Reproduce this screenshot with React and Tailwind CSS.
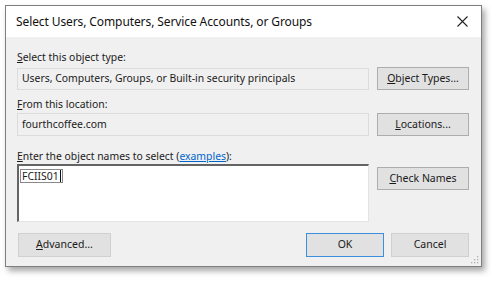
export default function App() {
  const font = { fontFamily: '"Noto Sans", "Open Sans", Arial, sans-serif' };
  const btn =
    "h-[23px] w-[92px] flex items-center justify-center bg-[#e1e1e1] border border-[#adadad] text-[10.5px] text-[#1a1a1a]";
  return (
    <div className="w-[498px] h-[283px] bg-white overflow-hidden" style={font}>
      <div className="ml-[5px] mt-[5px] w-[477px] h-[262px] border border-[#7f7f7f] bg-[#f0f0f0] flex flex-col shadow-[3px_4px_6px_rgba(0,0,0,0.35)]">
        <div className="h-[31px] bg-white flex items-center justify-between pl-[10px] pr-[12px]">
          <span className="text-[12px] text-[#111] tracking-[-0.1px]">
            Select Users, Computers, Service Accounts, or Groups
          </span>
          <svg width="11" height="11" viewBox="0 0 11 11" className="mr-[1px]">
            <path d="M0.5 0.5L10.5 10.5M10.5 0.5L0.5 10.5" stroke="#222" strokeWidth="1.1" />
          </svg>
        </div>
        <div className="flex-1 flex flex-col pl-[11px] pr-[12px] text-[10.4px] text-[#1a1a1a] relative">
          <div className="mt-[13px] h-[14px] leading-[14px]">
            <u>S</u>elect this object type:
          </div>
          <div className="mt-[3px] flex items-center gap-[8px]">
            <div className="h-[22px] w-[352px] border border-[#dcdcdc] bg-[#f0f0f0] flex items-center pl-[4px]">
              Users, Computers, Groups, or Built-in security principals
            </div>
            <div className={btn}>
              <span>
                <u>O</u>bject Types...
              </span>
            </div>
          </div>
          <div className="mt-[7px] h-[14px] leading-[14px]">
            <u>F</u>rom this location:
          </div>
          <div className="mt-[2px] flex items-center gap-[8px]">
            <div className="h-[23px] w-[352px] border border-[#dcdcdc] bg-[#f0f0f0] flex items-center pl-[4px]">
              fourthcoffee.com
            </div>
            <div className={btn}>
              <span>
                <u>L</u>ocations...
              </span>
            </div>
          </div>
          <div className="mt-[13px] h-[14px] leading-[14px]">
            <u>E</u>nter the object names to select (
            <span className="text-[#0066cc] underline">examples</span>):
          </div>
          <div className="mt-[1px] flex items-start gap-[8px]">
            <div className="h-[58px] w-[352px] bg-white border-t-2 border-l-2 border-[#646464] border-r border-b border-r-[#e3e3e3] border-b-[#e3e3e3] pl-[1px] pt-[3px]">
              <span className="inline-flex items-center h-[14px] border border-[#8a8a8a] px-[1px] leading-[12px]">
                FCIIS01
                <span className="ml-[1px] w-px h-[12px] bg-[#111]" />
              </span>
            </div>
            <div className={`${btn} mt-[3px]`}>
              <span>
                <u>C</u>heck Names
              </span>
            </div>
          </div>
          <div className="mt-[11px] flex items-center text-[10.5px]">
            <div className="h-[24px] w-[93px] flex items-center justify-center bg-[#e1e1e1] border border-[#d0d0d0] ml-[1px]">
              <span>
                <u>A</u>dvanced...
              </span>
            </div>
            <div className="flex-1" />
            <div className="h-[24px] w-[78px] flex items-center justify-center bg-[#e1e1e1] border border-[#3c8fdc]">
              OK
            </div>
            <div className="h-[24px] w-[78px] ml-[7px] flex items-center justify-center bg-[#e1e1e1] border border-[#d0d0d0]">
              Cancel
            </div>
          </div>
          <svg width="8" height="8" viewBox="0 0 8 8" className="absolute right-[2px] bottom-[2px]">
            <rect x="6" y="0" width="1.3" height="1.3" fill="#b0b0b0" />
            <rect x="3" y="3" width="1.3" height="1.3" fill="#b0b0b0" />
            <rect x="6" y="3" width="1.3" height="1.3" fill="#b0b0b0" />
            <rect x="0" y="6" width="1.3" height="1.3" fill="#b0b0b0" />
            <rect x="3" y="6" width="1.3" height="1.3" fill="#b0b0b0" />
            <rect x="6" y="6" width="1.3" height="1.3" fill="#b0b0b0" />
          </svg>
        </div>
      </div>
    </div>
  );
}
